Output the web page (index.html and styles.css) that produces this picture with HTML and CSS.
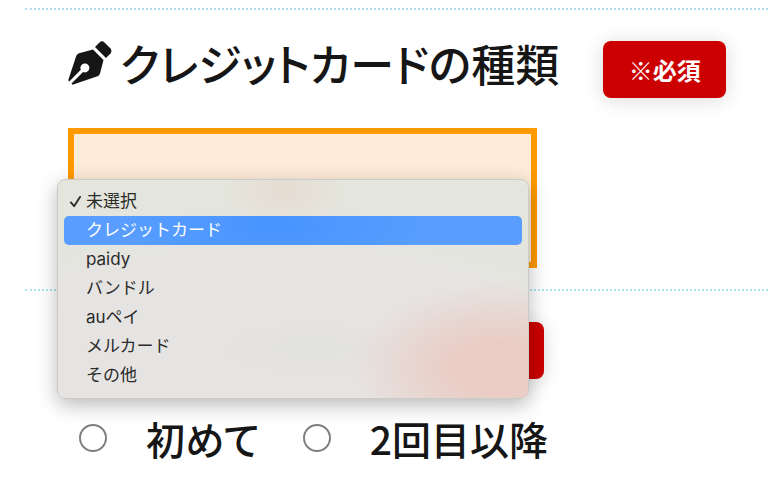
FILE: index.html
```html
<!DOCTYPE html>
<html lang="ja">
<head>
  <meta charset="UTF-8">
  <meta name="viewport" content="width=device-width, initial-scale=1.0">
  <title>クレジットカードの種類</title>
  <link rel="stylesheet" href="styles.css">
</head>
<body>
  <form class="form">
    <section class="field">
      <div class="field-header">
        <h2 class="field-title">
          <svg class="pen-icon" viewBox="0 0 44 44" aria-hidden="true">
            <path d="M27 6 31.500 1.500Q34-.8 36.500 1.500L42.300 7.300Q44.500 10 42.500 12.500L38 17Z"/>
            <path fill-rule="evenodd" d="M25 8.500 35.500 19 32 32.500Q31.500 34.500 29.500 35.200L4.500 43.700 3.500 42.500 15 31A4.500 4.500 0 1 0 12.800 28.800L1.300 40.500 .2 39.300 8.200 15Q9 12.800 11 12.300Z"/>
          </svg>
          <label for="card-type">クレジットカードの種類</label>
        </h2>
        <span class="badge">※必須</span>
      </div>
      <div class="select-wrap">
        <select id="card-type" class="select"></select>
        <div class="menu" role="listbox">
          <button type="button" class="menu-item" role="option" aria-selected="true">
            <svg class="check" viewBox="0 0 14 14" aria-hidden="true"><path d="M2 8 5.500 12 12 2"/></svg>未選択
          </button>
          <button type="button" class="menu-item active" role="option">クレジットカード</button>
          <button type="button" class="menu-item" role="option">paidy</button>
          <button type="button" class="menu-item" role="option">バンドル</button>
          <button type="button" class="menu-item" role="option">auペイ</button>
          <button type="button" class="menu-item" role="option">メルカード</button>
          <button type="button" class="menu-item" role="option">その他</button>
        </div>
      </div>
    </section>

    <section class="field">
      <div class="field-header field-header-short">
        <span class="badge"></span>
      </div>
      <div class="radio-group">
        <label class="radio-label"><input type="radio" name="times" class="radio">初めて</label>
        <label class="radio-label"><input type="radio" name="times" class="radio">2回目以降</label>
      </div>
    </section>
  </form>
</body>
</html>
```
FILE: styles.css
```css
* {
  margin: 0;
  padding: 0;
  box-sizing: border-box;
}

body {
  background-color: #fff;
  color: #161616;
  font-family: "Noto Sans CJK JP", sans-serif;
}

.form {
  padding: 8px 0 0 25px;
}

.field {
  border-top: 2px dotted #b0e0f5;
  padding: 31px 0 21px 43px;
}

.field-header {
  display: flex;
  align-items: flex-start;
  gap: 44px;
  margin-bottom: 30px;
}

.field-header-short {
  width: 68%;
  justify-content: flex-end;
}

.field-title {
  display: flex;
  align-items: center;
  gap: 8px;
  font-size: 44px;
  font-weight: 500;
  line-height: 40px;
  font-feature-settings: "palt";
  white-space: nowrap;
}

.pen-icon {
  width: 44px;
  height: 44px;
  fill: #161616;
}

.badge {
  width: 123px;
  height: 57px;
  line-height: 57px;
  border-radius: 8px;
  background-color: #c00;
  color: #fff;
  font-size: 24px;
  font-weight: 700;
  text-align: center;
  box-shadow: 0 2px 20px rgba(0, 0, 0, 0.15);
}

.select-wrap {
  position: relative;
  width: 67%;
}

.select {
  display: block;
  width: 100%;
  height: 140px;
  border: 6px solid #f90;
  border-radius: 0;
  background-color: #fdecd8;
  appearance: none;
}

.menu {
  position: absolute;
  top: 51px;
  left: -11px;
  right: 8px;
  padding: 7px 6px 8px;
  border: 1px solid #cbcac6;
  border-radius: 8px;
  background:
    radial-gradient(ellipse 150px 85px at 94% 86%, #eaccc5 30%, rgba(232, 208, 200, 0.7) 60%, transparent),
    radial-gradient(ellipse 60px 35px at 48% 5%, #e6dcd2, transparent),
    radial-gradient(ellipse 90px 25px at 54% 77%, #e1e1df, transparent),
    radial-gradient(ellipse 420px 150px at 45% 80%, #e6e4e3 55%, #e4e5dc);
  box-shadow: 0 6px 20px rgba(0, 0, 0, 0.28);
}

.menu-item {
  position: relative;
  display: block;
  width: 100%;
  padding-left: 22px;
  border: none;
  border-radius: 5px;
  background: none;
  color: #2b2b2a;
  font-family: Inter, "Noto Sans CJK JP", sans-serif;
  font-size: 17px;
  line-height: 29px;
  text-align: left;
}

.menu-item.active {
  background: radial-gradient(ellipse 150px 50px at 46% 30%, #4794ff, #589dff);
  color: #fff;
}

.check {
  position: absolute;
  left: 5px;
  top: 8px;
  width: 13px;
  height: 13px;
  fill: none;
  stroke: #2b2b2a;
  stroke-width: 2;
  stroke-linecap: round;
  stroke-linejoin: round;
}

.radio-group {
  display: flex;
  gap: 43px;
  padding-left: 11px;
}

.radio-label {
  display: flex;
  align-items: center;
  gap: 39px;
  font-size: 39px;
  font-weight: 500;
  line-height: 58px;
  font-feature-settings: "palt";
  white-space: nowrap;
}

.radio {
  width: 28px;
  height: 28px;
  border: 2px solid #808080;
  border-radius: 50%;
  background-color: #fff;
  appearance: none;
}
```
